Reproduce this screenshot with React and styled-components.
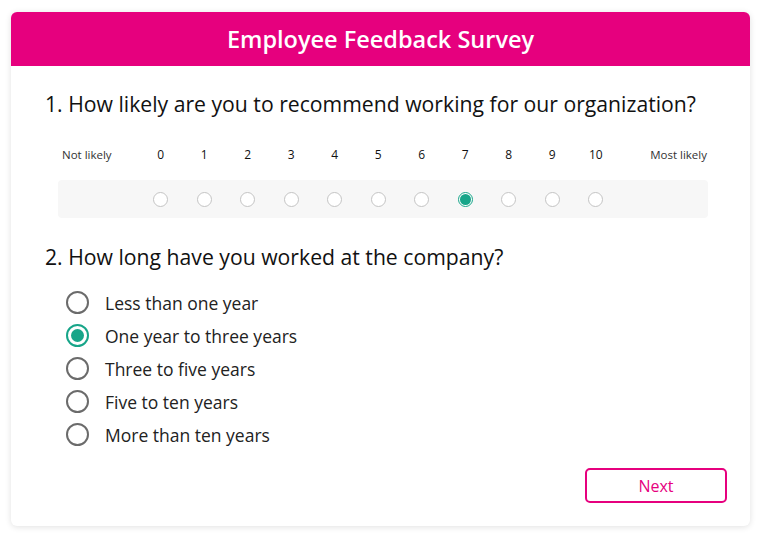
import React, { useState } from "react";
import styled, { createGlobalStyle } from "styled-components";

const Global = createGlobalStyle`
  * { box-sizing: border-box; }
  html, body { margin: 0; padding: 0; background: #ffffff; }
  body { font-family: "Open Sans", "Noto Sans", sans-serif; color: #1a1a1a; }
`;

const Page = styled.div`
  width: 762px;
  height: 539px;
  padding: 12px 12px 0 11px;
`;

const Card = styled.div`
  width: 739px;
  height: 514px;
  border-radius: 6px;
  background: #fff;
  box-shadow: 0 1px 6px rgba(0, 0, 0, 0.12);
  overflow: hidden;
  display: flex;
  flex-direction: column;
`;

const Header = styled.div`
  height: 54px;
  background: #e6007e;
  color: #fff;
  display: flex;
  align-items: center;
  justify-content: center;
  font-size: 23.5px;
  font-weight: 600;
`;

const Body = styled.div`
  padding: 23px 42px 0 34px;
  display: flex;
  flex-direction: column;
  flex: 1;
`;

const Question = styled.div`
  font-size: 21.2px;
  line-height: 30px;
  color: #111;
  white-space: nowrap;
  margin: ${(p) => p.$mt || 0}px 0 0 0;
`;

const Scale = styled.div`
  margin: 24px 0 0 13px;
  width: 650px;
`;

const ScaleRow = styled.div`
  display: grid;
  grid-template-columns: 81px repeat(11, 43.5px) 1fr;
  align-items: center;
  height: ${(p) => p.$h}px;
  background: ${(p) => (p.$band ? "#f7f7f7" : "transparent")};
  border-radius: 4px;
  margin-top: ${(p) => p.$mt || 0}px;
`;

const EndLabel = styled.div`
  font-size: 11.5px;
  color: #333;
  text-align: ${(p) => p.$align};
  padding: ${(p) => (p.$align === "left" ? "0 0 0 4px" : "0 1px 0 0")};
  white-space: nowrap;
`;

const Num = styled.div`
  font-size: 12px;
  color: #111;
  text-align: center;
`;

const Cell = styled.div`
  display: flex;
  justify-content: center;
`;

const SmallRadio = styled.button`
  width: 15px;
  height: 15px;
  border-radius: 50%;
  padding: 0;
  border: 1px solid ${(p) => (p.$on ? "#17a589" : "#c4c4c4")};
  background: #fff;
  display: flex;
  align-items: center;
  justify-content: center;
  cursor: pointer;
  &::after {
    content: "";
    width: 11px;
    height: 11px;
    border-radius: 50%;
    background: ${(p) => (p.$on ? "#17a589" : "transparent")};
  }
`;

const Options = styled.div`
  display: flex;
  flex-direction: column;
  margin: 14px 0 0 21px;
`;

const Option = styled.label`
  display: flex;
  align-items: center;
  height: 33px;
  font-size: 17.5px;
  color: #222;
  cursor: pointer;
`;

const BigRadio = styled.span`
  width: 23px;
  height: 23px;
  border-radius: 50%;
  border: 2px solid ${(p) => (p.$on ? "#17a589" : "#6b6b6b")};
  background: #fff;
  display: flex;
  align-items: center;
  justify-content: center;
  margin-right: 16px;
  &::after {
    content: "";
    width: 13px;
    height: 13px;
    border-radius: 50%;
    background: ${(p) => (p.$on ? "#17a589" : "transparent")};
  }
`;

const Footer = styled.div`
  display: flex;
  justify-content: flex-end;
  margin-top: 17px;
`;

const NextButton = styled.button`
  width: 142px;
  height: 35px;
  border: 2px solid #e6007e;
  border-radius: 5px;
  background: #fff;
  color: #e6007e;
  font-family: "Open Sans", sans-serif;
  font-size: 16px;
  font-weight: 500;
  cursor: pointer;
  margin-right: -19px;
`;

const opts = [
  "Less than one year",
  "One year to three years",
  "Three to five years",
  "Five to ten years",
  "More than ten years",
];

export default function App() {
  const [score, setScore] = useState(7);
  const [tenure, setTenure] = useState(1);
  const nums = Array.from({ length: 11 }, (_, i) => i);
  return (
    <Page>
      <Global />
      <Card>
        <Header>Employee Feedback Survey</Header>
        <Body>
          <Question>1. How likely are you to recommend working for our organization?</Question>
          <Scale>
            <ScaleRow $h={22}>
              <EndLabel $align="left">Not likely</EndLabel>
              {nums.map((n) => (
                <Num key={n}>{n}</Num>
              ))}
              <EndLabel $align="right">Most likely</EndLabel>
            </ScaleRow>
            <ScaleRow $h={38} $band $mt={15}>
              <div />
              {nums.map((n) => (
                <Cell key={n}>
                  <SmallRadio $on={score === n} onClick={() => setScore(n)} aria-label={String(n)} />
                </Cell>
              ))}
              <div />
            </ScaleRow>
          </Scale>
          <Question $mt={24}>2. How long have you worked at the company?</Question>
          <Options>
            {opts.map((o, i) => (
              <Option key={o} onClick={() => setTenure(i)}>
                <BigRadio $on={tenure === i} />
                {o}
              </Option>
            ))}
          </Options>
          <Footer>
            <NextButton>Next</NextButton>
          </Footer>
        </Body>
      </Card>
    </Page>
  );
}
